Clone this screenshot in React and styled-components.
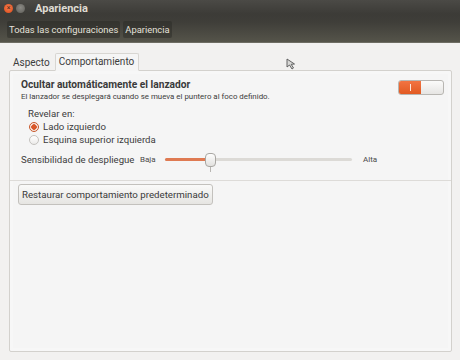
import React from "react";
import styled, { createGlobalStyle } from "styled-components";

const GlobalStyle = createGlobalStyle`
  html, body {
    margin: 0;
    padding: 0;
    background: #f2f1f0;
  }
  body {
    font-family: Roboto, "Liberation Sans", sans-serif;
    color: #3c3c3c;
  }
`;

const Window = styled.div`
  position: relative;
  width: 460px;
  height: 360px;
  display: flex;
  flex-direction: column;
  background: #f2f1f0;
  overflow: hidden;
`;

const Header = styled.div`
  background: linear-gradient(#4b4a46 0px, #3c3b37 14px, #3f3e39 22px, #55544a 42px);
  border-bottom: 1px solid #6e6d63;
`;

const TitleBar = styled.div`
  height: 17px;
  display: flex;
  align-items: center;
  padding-left: 4px;
  gap: 3px;
`;

const WinButton = styled.span`
  width: 9px;
  height: 9px;
  border-radius: 50%;
  background: ${({ $close }) =>
    $close
      ? "radial-gradient(circle at 50% 40%, #f47d4f, #dd4a18)"
      : "radial-gradient(circle at 50% 40%, #8b8a85, #5e5d58)"};
  display: flex;
  align-items: center;
  justify-content: center;
  color: #4a2818;
  font-size: 7px;
  line-height: 1;
`;

const Title = styled.span`
  margin-left: 7px;
  font-size: 11px;
  font-weight: 700;
  color: #dfdbd2;
`;

const Toolbar = styled.div`
  height: 25px;
  display: flex;
  align-items: center;
  padding-left: 7px;
  gap: 3px;
`;

const Crumb = styled.span`
  height: 17px;
  display: flex;
  align-items: center;
  padding: 0 2px;
  font-size: 9.4px;
  color: #e4e1da;
  background: rgba(40, 39, 35, 0.45);
  border-radius: 2px;
`;

const Content = styled.div`
  flex: 1;
  display: flex;
  flex-direction: column;
  padding: 12px 8px 8px 9px;
`;

const Tabs = styled.div`
  display: flex;
  align-items: flex-end;
  height: 16px;
  margin-bottom: -1px;
  position: relative;
  z-index: 1;
`;

const Tab = styled.div`
  height: ${({ $active }) => ($active ? "15px" : "13px")};
  display: flex;
  align-items: center;
  padding: 0 4px 1px 3px;
  font-size: 10px;
  color: #3c3c3c;
  background: ${({ $active }) => ($active ? "#f5f5f5" : "transparent")};
  border: 1px solid ${({ $active }) => ($active ? "#d8d6d2" : "transparent")};
  border-bottom: 1px solid ${({ $active }) => ($active ? "#f5f5f5" : "transparent")};
  border-radius: 2px 2px 0 0;
`;

const Panel = styled.div`
  flex: 1;
  background: #f5f5f5;
  border: 1px solid #d3d1cd;
  border-radius: 2px;
  box-shadow: inset 0 0 0 3px #f7f7f7;
  display: flex;
  flex-direction: column;
`;

const Section = styled.div`
  padding: 7px 7px 0 11px;
`;

const HeadRow = styled.div`
  display: flex;
  justify-content: space-between;
  align-items: flex-start;
`;

const HeadText = styled.div`
  display: flex;
  flex-direction: column;
`;

const Heading = styled.div`
  font-size: 10.2px;
  font-weight: 700;
  line-height: 13px;
  color: #3a3a3a;
`;

const Hint = styled.div`
  font-size: 7.9px;
  line-height: 11px;
  color: #3c3c3c;
`;

const Switch = styled.div`
  width: 44px;
  height: 13px;
  margin-top: 2px;
  border: 1px solid #b8b6b2;
  border-radius: 3px;
  display: flex;
  overflow: hidden;
  background: linear-gradient(#fbfbfa, #e6e5e3);
`;

const SwitchOn = styled.div`
  width: 22px;
  background: linear-gradient(#f27442, #e25a22);
  display: flex;
  align-items: center;
  justify-content: center;
  &::after {
    content: "";
    width: 1px;
    height: 7px;
    background: #fde7dc;
  }
`;

const RevealGroup = styled.div`
  padding: 5px 0 0 18px;
  display: flex;
  flex-direction: column;
`;

const Label = styled.div`
  font-size: 9.6px;
  line-height: 13px;
  color: #3c3c3c;
`;

const Radio = styled.label`
  display: flex;
  align-items: center;
  gap: 4px;
  font-size: 9.6px;
  line-height: 13px;
  color: #3c3c3c;
  padding-left: 1px;
`;

const RadioDot = styled.span`
  width: 8px;
  height: 8px;
  border-radius: 50%;
  border: 1px solid ${({ $on }) => ($on ? "#c8582c" : "#c4c2be")};
  background: ${({ $on }) =>
    $on
      ? "radial-gradient(circle, #d8572a 0 2.5px, #f7e9e2 3px)"
      : "linear-gradient(#ffffff, #ecebe9)"};
`;

const SliderRow = styled.div`
  display: flex;
  align-items: center;
  padding: 5px 0 0 11px;
  height: 16px;
`;

const SliderLabel = styled.span`
  font-size: 9.6px;
  color: #3c3c3c;
  width: 119px;
  white-space: nowrap;
`;

const Small = styled.span`
  font-size: 8px;
  color: #4a4a4a;
  width: ${({ $w }) => ($w ? `${$w}px` : "auto")};
`;

const Track = styled.div`
  position: relative;
  width: 187px;
  height: 3px;
  margin: 0 11px 0 9px;
  background: #dcdad6;
  border-radius: 2px;
`;

const Fill = styled.div`
  height: 100%;
  background: #df7a52;
  border-radius: 2px;
`;

const Knob = styled.div`
  position: absolute;
  top: -5px;
  width: 9px;
  height: 12px;
  margin-left: -5px;
  border: 1px solid #a9a7a3;
  border-radius: 4px;
  background: linear-gradient(#fdfdfd, #e2e1df);
  &::after {
    content: "";
    position: absolute;
    left: 4px;
    top: 13px;
    width: 1px;
    height: 5px;
    background: #b8b6b2;
  }
`;

const Divider = styled.div`
  height: 1px;
  background: #dddbd8;
  margin-top: 13px;
`;

const Button = styled.button`
  align-self: flex-start;
  margin: 3px 0 0 8px;
  height: 21px;
  padding: 0 3px;
  font-family: inherit;
  font-size: 9.7px;
  color: #3a3a3a;
  border: 1px solid #c3c1bd;
  border-radius: 3px;
  background: linear-gradient(#fafaf9, #e6e5e2);
`;

const Cursor = styled.svg`
  position: absolute;
  left: 286px;
  top: 58px;
`;

export default function App() {
  const level = 0.24;
  return (
    <>
      <GlobalStyle />
      <Window>
        <Header>
          <TitleBar>
            <WinButton $close>×</WinButton>
            <WinButton />
            <Title>Apariencia</Title>
          </TitleBar>
          <Toolbar>
            <Crumb>Todas las configuraciones</Crumb>
            <Crumb>Apariencia</Crumb>
          </Toolbar>
        </Header>
        <Content>
          <Tabs>
            <Tab>Aspecto</Tab>
            <Tab $active>Comportamiento</Tab>
          </Tabs>
          <Panel>
            <Section>
              <HeadRow>
                <HeadText>
                  <Heading>Ocultar automáticamente el lanzador</Heading>
                  <Hint>
                    El lanzador se desplegará cuando se mueva el puntero al foco definido.
                  </Hint>
                </HeadText>
                <Switch>
                  <SwitchOn />
                </Switch>
              </HeadRow>
            </Section>
            <RevealGroup>
              <Label>Revelar en:</Label>
              <Radio>
                <RadioDot $on />
                Lado izquierdo
              </Radio>
              <Radio>
                <RadioDot />
                Esquina superior izquierda
              </Radio>
            </RevealGroup>
            <SliderRow>
              <SliderLabel>Sensibilidad de despliegue</SliderLabel>
              <Small $w={16}>Baja</Small>
              <Track>
                <Fill style={{ width: `${level * 100}%` }} />
                <Knob style={{ left: `${level * 100}%` }} />
              </Track>
              <Small>Alta</Small>
            </SliderRow>
            <Divider />
            <Button>Restaurar comportamiento predeterminado</Button>
          </Panel>
        </Content>
        <Cursor width="10" height="12" viewBox="0 0 10 12">
          <path d="M1 1 L1 9 L3.5 7 L6 11 L7.5 10 L5.2 6.3 L8.5 6 Z" fill="#d8d8d6" stroke="#555" strokeWidth="0.9" />
        </Cursor>
      </Window>
    </>
  );
}
